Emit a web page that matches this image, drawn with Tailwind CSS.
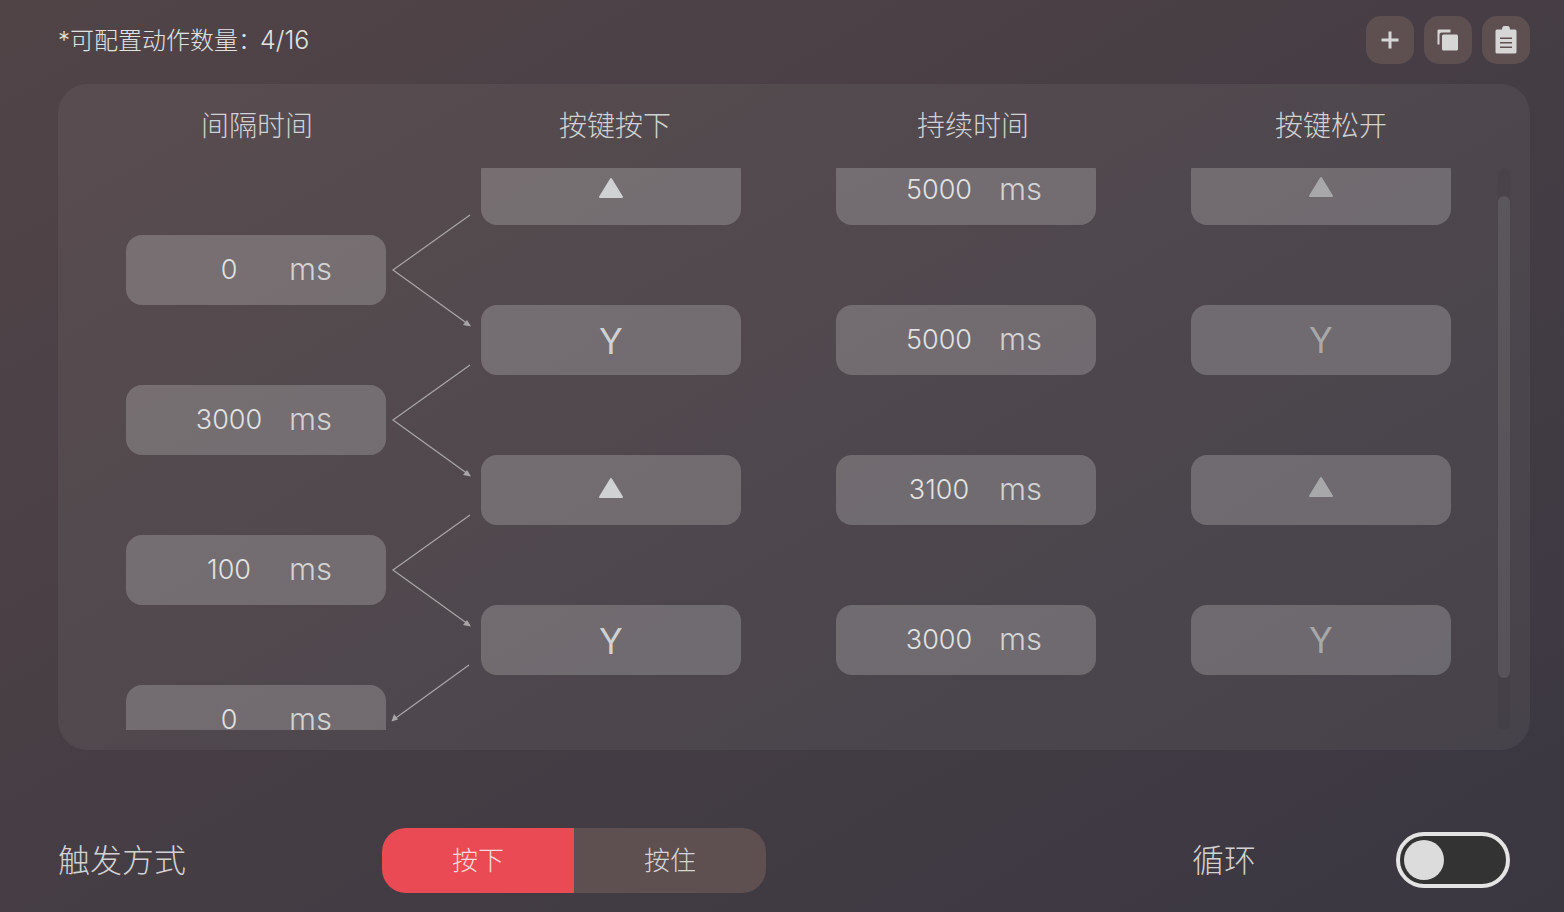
<!DOCTYPE html>
<html lang="zh-CN">
  <head>
    <meta charset="UTF-8" />
    <title>动作配置</title>
    <script src="https://cdn.jsdelivr.net/npm/@tailwindcss/browser@4"></script>
  </head>
  <body class="h-[912px] w-[1564px] overflow-hidden bg-linear-to-br from-[#514447] to-[#3a3741] font-['Inter','Noto_Sans_CJK_SC',sans-serif] font-light text-[#e2e2e2]">
    <!-- top bar -->
    <div class="flex h-[84px] items-start pl-[58px] pr-[34px]">
      <div class="mt-[21px] flex h-[40px] items-center text-[24px]">
        <span>*可配置动作数量：</span><span class="-ml-[2px] text-[25px]">4/16</span>
      </div>
      <div class="ml-auto mt-[16px] flex gap-[10px]">
        <button class="flex h-[48px] w-[48px] items-center justify-center rounded-[15px] bg-[#5e4f51]">
          <svg width="24" height="24" viewBox="0 0 24 24" fill="none" stroke="#d6d6d6" stroke-width="3"><path d="M12 3.500v17M3.500 12h17" /></svg>
        </button>
        <button class="flex h-[48px] w-[48px] items-center justify-center rounded-[15px] bg-[#5e4f51]">
          <svg width="24" height="24" viewBox="0 0 24 24" fill="#d6d6d6"><path d="M1.500 2.500a1 1 0 0 1 1-1h12v3h-9a2 2 0 0 0-2 2v10h-2z" /><rect x="6" y="6.500" width="16" height="16" rx="1.500" /></svg>
        </button>
        <button class="flex h-[48px] w-[48px] items-center justify-center rounded-[15px] bg-[#5e4f51]">
          <svg width="24" height="28" viewBox="0 0 24 28" fill="#d6d6d6"><path fill-rule="evenodd" d="M3 3.500h5a4 4 0 0 1 8 0h5a1.500 1.500 0 0 1 1.500 1.500v21a1.500 1.500 0 0 1-1.500 1.500H3A1.500 1.500 0 0 1 1.500 26V5A1.500 1.500 0 0 1 3 3.500zM6 11.500v1.600h12v-1.600zM6 16v1.600h12V16zM6 20.500v1.600h12v-1.600z" /></svg>
        </button>
      </div>
    </div>

    <!-- action table -->
    <div class="ml-[58px] h-[666px] w-[1472px] rounded-[30px] bg-white/[0.05] px-[20px]">
      <div class="grid grid-cols-4 pb-[21px] pt-[22px] text-center text-[28px] leading-[41px] text-[#d2d2d2]">
        <div>间隔时间</div>
        <div>按键按下</div>
        <div>持续时间</div>
        <div>按键松开</div>
      </div>
      <div class="flex h-[562px]">
        <div class="h-full w-[1373px] overflow-hidden pl-[48px]">
          <div class="-mt-[13px] flex">
            <!-- interval -->
            <div class="flex w-[260px] flex-col gap-[80px] pt-[80px]">
              <div class="flex h-[70px] items-center rounded-[16px] bg-white/20 text-[27px]"><span class="ml-[63px] w-[80px] text-center">0</span><span class="ml-[20px] -mt-[2px] text-[31px] text-[#d2d2d2]">ms</span></div>
              <div class="flex h-[70px] items-center rounded-[16px] bg-white/20 text-[27px]"><span class="ml-[63px] w-[80px] text-center">3000</span><span class="ml-[20px] -mt-[2px] text-[31px] text-[#d2d2d2]">ms</span></div>
              <div class="flex h-[70px] items-center rounded-[16px] bg-white/20 text-[27px]"><span class="ml-[63px] w-[80px] text-center">100</span><span class="ml-[20px] -mt-[2px] text-[31px] text-[#d2d2d2]">ms</span></div>
              <div class="flex h-[70px] items-center rounded-[16px] bg-white/20 text-[27px]"><span class="ml-[63px] w-[80px] text-center">0</span><span class="ml-[20px] -mt-[2px] text-[31px] text-[#d2d2d2]">ms</span></div>
            </div>
            <!-- arrows -->
            <div class="flex w-[95px] flex-col pt-[40px]">
              <svg width="95" height="150" fill="none" stroke="#aaa6a8" stroke-width="1.200"><path d="M84 20 7 75l77 55.500" /><path d="M85 131.500l-8-1.500 4-5z" fill="#aaa6a8" stroke="none" /></svg>
              <svg width="95" height="150" fill="none" stroke="#aaa6a8" stroke-width="1.200"><path d="M84 20 7 75l77 55.500" /><path d="M85 131.500l-8-1.500 4-5z" fill="#aaa6a8" stroke="none" /></svg>
              <svg width="95" height="150" fill="none" stroke="#aaa6a8" stroke-width="1.200"><path d="M84 20 7 75l77 55.500" /><path d="M85 131.500l-8-1.500 4-5z" fill="#aaa6a8" stroke="none" /></svg>
              <svg width="95" height="150" fill="none" stroke="#aaa6a8" stroke-width="1.200"><path d="M83 20 7 75" /><path d="M5.500 76.500l2.500-7.500 4 5.500z" fill="#aaa6a8" stroke="none" /></svg>
            </div>
            <!-- key down -->
            <div class="flex w-[260px] flex-col gap-[80px]">
              <div class="flex h-[70px] items-center justify-center rounded-[16px] bg-white/20"><svg width="24" height="21" class="-mt-[6px]" fill="#d0d1d3" stroke="#d0d1d3" stroke-width="2" stroke-linejoin="round"><path d="M12 2 23 20H1z" /></svg></div>
              <div class="flex h-[70px] items-center justify-center rounded-[16px] bg-white/20 pt-[2px] text-[35px] font-normal text-[#d0d1d3]">Y</div>
              <div class="flex h-[70px] items-center justify-center rounded-[16px] bg-white/20"><svg width="24" height="21" class="-mt-[6px]" fill="#d0d1d3" stroke="#d0d1d3" stroke-width="2" stroke-linejoin="round"><path d="M12 2 23 20H1z" /></svg></div>
              <div class="flex h-[70px] items-center justify-center rounded-[16px] bg-white/20 pt-[2px] text-[35px] font-normal text-[#d0d1d3]">Y</div>
            </div>
            <!-- duration -->
            <div class="ml-[95px] flex w-[260px] flex-col gap-[80px]">
              <div class="flex h-[70px] items-center rounded-[16px] bg-white/20 text-[27px]"><span class="ml-[63px] w-[80px] text-center">5000</span><span class="ml-[20px] -mt-[2px] text-[31px] text-[#d2d2d2]">ms</span></div>
              <div class="flex h-[70px] items-center rounded-[16px] bg-white/20 text-[27px]"><span class="ml-[63px] w-[80px] text-center">5000</span><span class="ml-[20px] -mt-[2px] text-[31px] text-[#d2d2d2]">ms</span></div>
              <div class="flex h-[70px] items-center rounded-[16px] bg-white/20 text-[27px]"><span class="ml-[63px] w-[80px] text-center">3100</span><span class="ml-[20px] -mt-[2px] text-[31px] text-[#d2d2d2]">ms</span></div>
              <div class="flex h-[70px] items-center rounded-[16px] bg-white/20 text-[27px]"><span class="ml-[63px] w-[80px] text-center">3000</span><span class="ml-[20px] -mt-[2px] text-[31px] text-[#d2d2d2]">ms</span></div>
            </div>
            <!-- key up -->
            <div class="ml-[95px] flex w-[260px] flex-col gap-[80px]">
              <div class="flex h-[70px] items-center justify-center rounded-[16px] bg-white/20"><svg width="24" height="21" class="-mt-[7px]" fill="#a8a8ab" stroke="#a8a8ab" stroke-width="2" stroke-linejoin="round"><path d="M12 2 23 20H1z" /></svg></div>
              <div class="flex h-[70px] items-center justify-center rounded-[16px] bg-white/20 text-[35px] font-normal text-[#a8a8ab]">Y</div>
              <div class="flex h-[70px] items-center justify-center rounded-[16px] bg-white/20"><svg width="24" height="21" class="-mt-[7px]" fill="#a8a8ab" stroke="#a8a8ab" stroke-width="2" stroke-linejoin="round"><path d="M12 2 23 20H1z" /></svg></div>
              <div class="flex h-[70px] items-center justify-center rounded-[16px] bg-white/20 text-[35px] font-normal text-[#a8a8ab]">Y</div>
            </div>
          </div>
        </div>
        <!-- scrollbar -->
        <div class="ml-[47px] h-full w-[12px] rounded-[6px] bg-black/[0.04] pt-[28px]">
          <div class="h-[482px] w-[12px] rounded-[6px] bg-white/10"></div>
        </div>
      </div>
    </div>

    <!-- footer -->
    <div class="ml-[58px] mt-[78px] flex h-[65px] items-center">
      <div class="w-[324px] text-[32px] text-[#d2d2d2]">触发方式</div>
      <div class="flex h-[65px] w-[384px] overflow-hidden rounded-[24px] text-[26px]">
        <div class="flex w-[192px] items-center justify-center bg-[#ea4a54] text-[#f3dcdc]">按下</div>
        <div class="flex w-[192px] items-center justify-center bg-[#5e4f51] text-[#d6d6d6]">按住</div>
      </div>
      <div class="ml-[426px] w-[64px] text-[32px] text-[#d2d2d2]">循环</div>
      <div class="-mt-[1px] ml-[140px] flex h-[56px] w-[114px] items-center rounded-full border-[4px] border-[#e4e4e4] bg-[#333333] pl-[4px]">
        <div class="h-[40px] w-[40px] rounded-full bg-[#dcdcdc]"></div>
      </div>
    </div>
  </body>
</html>
